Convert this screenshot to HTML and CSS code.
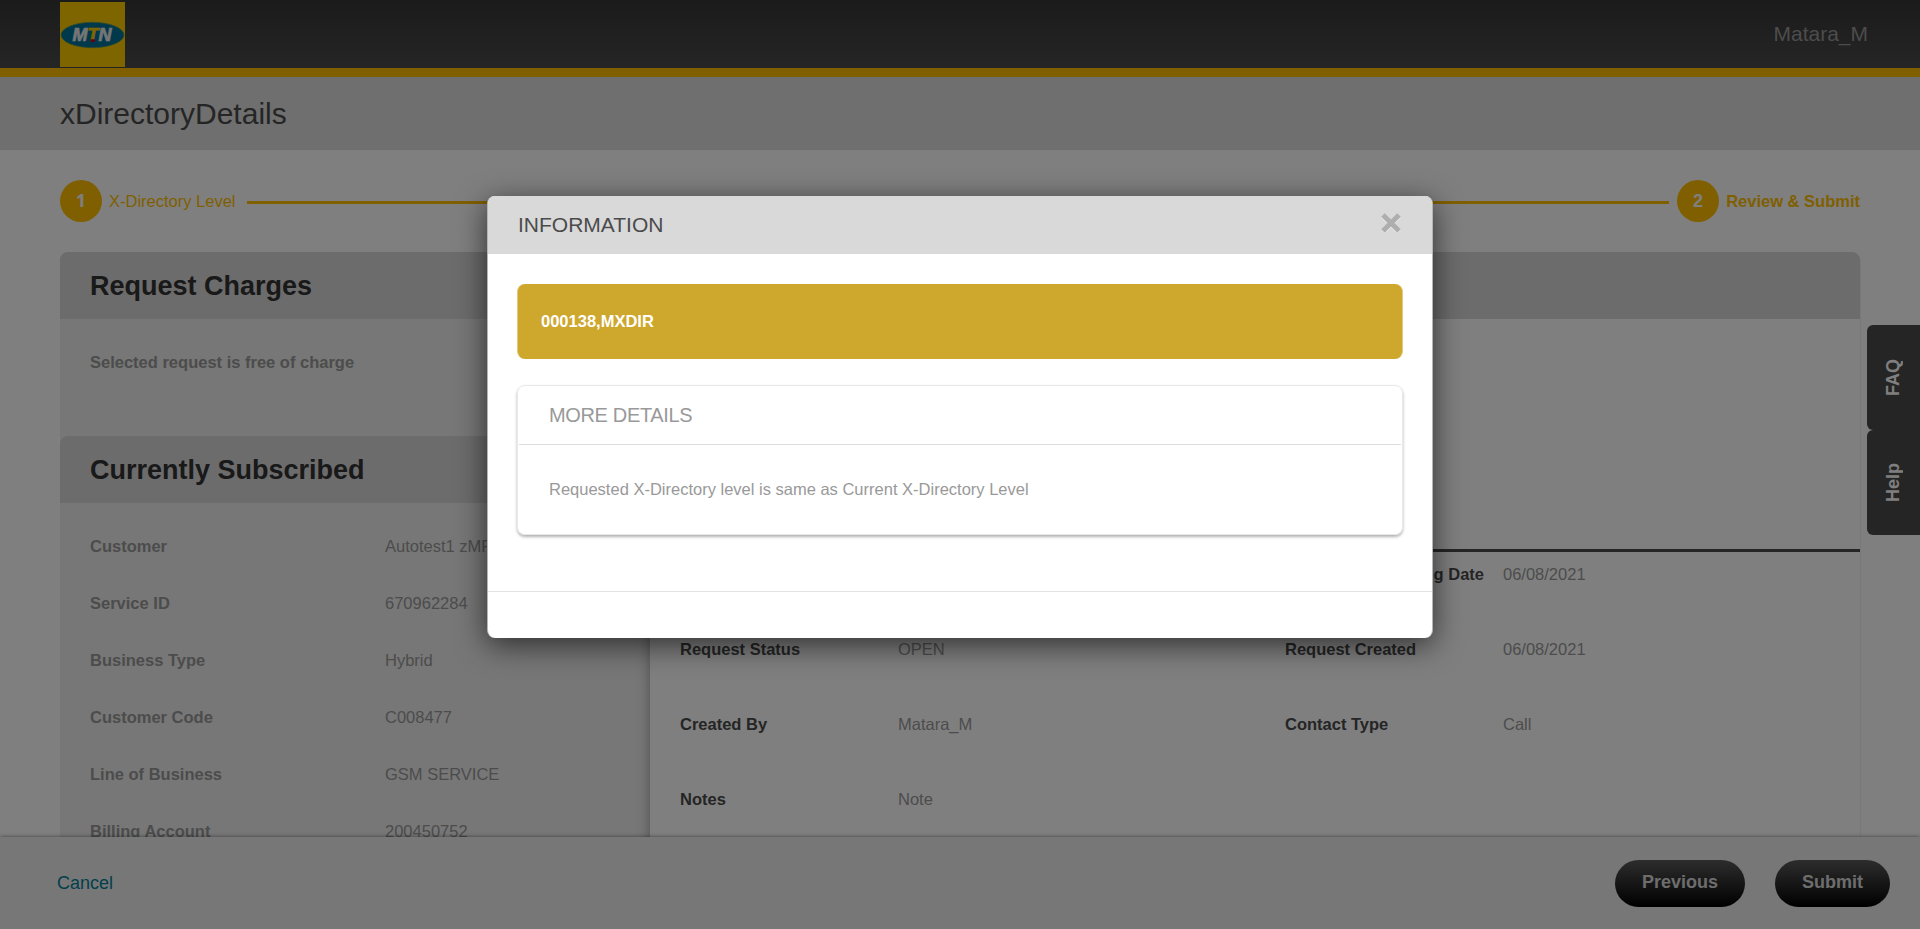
FILE: index.html
```html
<!DOCTYPE html>
<html lang="en">
<head>
<meta charset="utf-8">
<title>xDirectoryDetails</title>
<link rel="stylesheet" href="styles.css">
</head>
<body>
<div class="page">
  <header class="topbar">
    <svg class="logo" viewBox="0 0 65 65" width="65" height="65">
      <rect width="65" height="65" fill="#ffcb00"/>
      <ellipse cx="32.5" cy="33" rx="31.5" ry="12.7" fill="#007299" stroke="#6a9a50" stroke-width=".8"/>
      <text x="12.5" y="39" class="logo-text" textLength="39" lengthAdjust="spacingAndGlyphs"><tspan fill="#ececec" stroke="#ececec">M</tspan><tspan fill="#ffcb00" stroke="#ffcb00">T</tspan><tspan fill="#ececec" stroke="#ececec">N</tspan></text>
      <rect x="30.5" y="37.3" width="4.5" height="2.6" rx="1" fill="#c8002a"/>
    </svg>
    <span class="user">Matara_M</span>
  </header>
  <div class="titlebar"><h1>xDirectoryDetails</h1></div>
  <main class="content">
    <div class="steps">
      <span class="step-num step-num-first">1</span>
      <span class="step-label">X-Directory Level</span>
      <span class="step-line"></span>
      <span class="step-num">2</span>
      <span class="step-label step-current">Review &amp; Submit</span>
    </div>
    <div class="columns">
      <section class="side">
        <h2>Request Charges</h2>
        <p class="free">Selected request is free of charge</p>
        <h2>Currently Subscribed</h2>
        <dl class="subscribed">
          <dt>Customer</dt><dd>Autotest1 zMF</dd>
          <dt>Service ID</dt><dd>670962284</dd>
          <dt>Business Type</dt><dd>Hybrid</dd>
          <dt>Customer Code</dt><dd>C008477</dd>
          <dt>Line of Business</dt><dd>GSM SERVICE</dd>
          <dt>Billing Account</dt><dd>200450752</dd>
        </dl>
      </section>
      <section class="review">
        <div class="review-head"></div>
        <div class="review-body"></div>
        <dl class="request">
          <dt></dt><dd></dd><dt class="wide">Expected Closing Date</dt><dd>06/08/2021</dd>
          <dt>Request Status</dt><dd>OPEN</dd><dt>Request Created</dt><dd>06/08/2021</dd>
          <dt>Created By</dt><dd>Matara_M</dd><dt>Contact Type</dt><dd>Call</dd>
          <dt>Notes</dt><dd>Note</dd><dt></dt><dd></dd>
        </dl>
      </section>
    </div>
  </main>
  <footer class="actions">
    <a class="cancel">Cancel</a>
    <button class="pill prev">Previous</button>
    <button class="pill submit">Submit</button>
  </footer>
  <nav class="tabs">
    <a class="tab"><span>FAQ</span></a>
    <a class="tab"><span>Help</span></a>
  </nav>
</div>
<div class="backdrop">
  <div class="modal">
    <div class="modal-head">
      <span>INFORMATION</span>
      <svg class="close" viewBox="0 0 20 20" width="20" height="20"><path d="M2 2.8 18 18.8M18 2.8 2 18.8" stroke="#ececec" stroke-width="5.2"/><path d="M2 2 18 18M18 2 2 18" stroke="#aeaeae" stroke-width="5"/></svg>
    </div>
    <div class="modal-body">
      <div class="alert">000138,MXDIR</div>
      <div class="card">
        <div class="card-head">MORE DETAILS</div>
        <div class="card-body">Requested X-Directory level is same as Current X-Directory Level</div>
      </div>
    </div>
    <div class="modal-foot"></div>
  </div>
</div>
</body>
</html>
```
FILE: styles.css
```css
* { box-sizing: border-box; }
body { margin: 0; overflow: hidden; font: 16.5px/24px "Liberation Sans", Arial, sans-serif; color: #999; background: #fff; }
h1, h2, p, dl, dt, dd { margin: 0; }
.page { height: 929px; display: flex; flex-direction: column; overflow: hidden; }

.topbar { flex: none; height: 77px; padding: 2px 52px 0 60px; display: flex; justify-content: space-between; align-items: flex-start; background: linear-gradient(#363636, #4b4b4b); border-bottom: 9px solid #ffbf00; }
.logo { display: block; }
.logo-text { font: italic bold 17.5px "Liberation Sans", Arial, sans-serif; stroke-width: .7; }
.user { font-size: 21px; line-height: 26px; margin-top: 19px; }

.titlebar { flex: none; height: 73px; padding-left: 60px; background: #dfdfdf; }
h1 { font-size: 30px; font-weight: 400; line-height: 73px; color: #4b4b4b; }

.content { flex: 1; min-height: 0; padding: 30px 60px 0; overflow: hidden; }
.steps { height: 42px; display: flex; align-items: center; color: #ffbf00; }
.step-num { width: 42px; height: 42px; border-radius: 50%; background: #ffbf00; color: #fff; font-weight: 700; font-size: 18px; line-height: 43px; text-align: center; }
.step-num-first { font-family: "Open Sans", sans-serif; line-height: 41px; }
.step-label { margin-left: 7px; }
.step-current { font-weight: 700; }
.step-line { flex: 1; height: 3px; margin: 2px 8px 0 11px; background: #ffbf00; }

.columns { display: flex; margin-top: 30px; height: 700px; border-radius: 8px 8px 0 0; border-right: 1px solid #f3f3f3; margin-right: -1px; }
.side { width: 590px; background: #eee; border-radius: 8px 0 0 0; }
h2 { height: 67px; padding-left: 30px; font-size: 27px; line-height: 68px; color: #333; background: #d8d8d8; border-radius: 8px 0 0 0; }
.free { height: 117px; padding: 31px 30px 0; font-weight: 700; }
.subscribed { display: grid; grid-template-columns: 295px 1fr; grid-auto-rows: 57px; padding: 31px 0 0 30px; }
dt { font-weight: 700; white-space: nowrap; }
.review { position: relative; flex: 1; background: #fff; box-shadow: 0 0 12px rgba(0, 0, 0, .35); clip-path: inset(0 0 0 -20px); }
.review-head { height: 67px; background: #d8d8d8; border-radius: 0 8px 0 0; }
.review-body { height: 233px; border-bottom: 3px solid #4b4b4b; }
.request { display: grid; grid-template-columns: 218px 387px 218px 1fr; grid-auto-rows: 75px; padding: 10px 0 0 30px; }
.request dt { color: #4b4b4b; }
.request .wide { width: 199px; text-align: right; }

.actions { position: relative; flex: none; height: 92px; padding: 23px 30px 0 57px; display: flex; align-items: flex-start; background: #eee; box-shadow: 0 0 4px rgba(0, 0, 0, .5); }
.cancel { margin-right: auto; font-size: 18px; line-height: 46px; color: #058099; }
.pill { height: 47px; border: 0; border-radius: 24px; padding: 0 0 2px; background: linear-gradient(#5a5a5a, #000); color: #dadada; font: bold 18px/45px "Liberation Sans", Arial, sans-serif; }
.prev { width: 130px; margin-right: 30px; }
.submit { width: 115px; }

.tabs { position: absolute; right: 0; top: 325px; width: 53px; }
.tab { height: 105px; display: flex; align-items: center; justify-content: center; padding-right: 2px; background: #4b4b4b; border-radius: 6px 0 0 6px; color: #fff; }
.tab span { writing-mode: vertical-rl; transform: rotate(180deg); font-weight: 700; font-size: 18px; }

.backdrop { position: absolute; inset: 0; background: rgba(0, 0, 0, .5); }
.modal { width: 946px; height: 442px; margin: 196px auto 0; background: #fff; border: 0 solid #b5b5b5; border-width: 0 1px; border-radius: 8px; box-shadow: 0 7px 30px rgba(0, 0, 0, .62); }
.modal-head { height: 58px; padding: 0 31px 0 30px; display: flex; justify-content: space-between; background: #d9d9d9; border-radius: 7px 7px 0 0; font-size: 21px; line-height: 58px; color: #4b4b4b; }
.close { margin-top: 17px; }
.modal-body { height: 337px; padding: 30px 29px 0; }
.alert { height: 75px; padding-left: 23px; border: 1px solid #e3c877; border-width: 0 1px; border-radius: 8px; background: #cea72d; color: #fff; font-weight: 700; line-height: 74px; }
.card { height: 150px; margin-top: 26px; border: 1px solid #e8e8e8; border-radius: 8px; box-shadow: 0 2px 3px rgba(0, 0, 0, .3); }
.card-head { height: 59px; margin: 0 1px; padding-left: 30px; border-bottom: 1px solid #ddd; font-size: 20px; line-height: 58px; letter-spacing: -.35px; }
.card-body { padding: 32px 31px 0; }
.modal-foot { height: 47px; border-top: 1px solid #e3e3e3; }
```
